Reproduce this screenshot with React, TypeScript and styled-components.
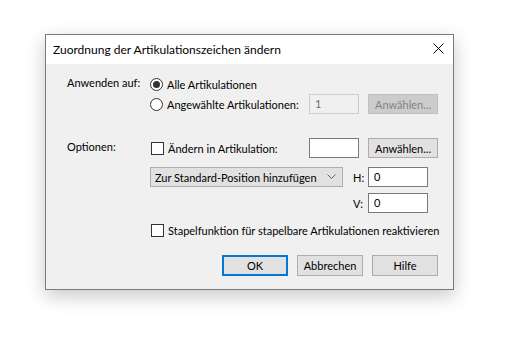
import * as React from "react"
import styled, { createGlobalStyle } from "styled-components"

const GlobalStyle = createGlobalStyle`
  html, body {
    margin: 0;
    padding: 0;
    background: #ffffff;
  }
  body {
    font-family: Lato, "Liberation Sans", sans-serif;
    font-size: 11px;
    color: #000;
  }
`

const Page = styled.div`
  width: 511px;
  height: 351px;
  padding: 34px 0 0 45px;
  box-sizing: border-box;
`

const Dialog = styled.div`
  width: 409px;
  height: 256px;
  box-sizing: border-box;
  border: 1px solid #7a7a7a;
  background: #f0f0f0;
  box-shadow: 0 6px 18px rgba(0, 0, 0, 0.22);
  display: flex;
  flex-direction: column;
`

const TitleBar = styled.div`
  height: 29px;
  background: #ffffff;
  display: flex;
  align-items: center;
  justify-content: space-between;
  padding: 0 9px 0 7px;
`

const Title = styled.span`
  font-size: 12px;
  color: #000;
  margin-top: -1px;
`

const CloseButton = styled.div`
  width: 12px;
  height: 12px;
  display: flex;
  align-items: center;
  justify-content: center;
  margin-top: -2px;
`

const Body = styled.div`
  flex: 1;
  display: flex;
  flex-direction: column;
  padding: 10px 15px 0 21px;
`

const Row = styled.div<{ $top?: number }>`
  display: flex;
  align-items: center;
  height: 20px;
  margin-top: ${(p) => p.$top ?? 0}px;
`

const SideLabel = styled.div`
  width: 83px;
  flex-shrink: 0;
  align-self: flex-start;
  line-height: 18px;
  white-space: nowrap;
`

const Indent = styled.div`
  width: 83px;
  flex-shrink: 0;
`

const Choice = styled.label<{ $width?: number }>`
  display: flex;
  align-items: center;
  gap: 4px;
  width: ${(p) => (p.$width ? `${p.$width}px` : "auto")};
  flex-shrink: 0;
  white-space: nowrap;
`

const Radio = styled.span<{ $checked?: boolean }>`
  width: 11px;
  height: 11px;
  flex-shrink: 0;
  border: 1px solid #333;
  border-radius: 50%;
  background: #fff;
  display: flex;
  align-items: center;
  justify-content: center;
  &::after {
    content: "";
    display: ${(p) => (p.$checked ? "block" : "none")};
    width: 7px;
    height: 7px;
    border-radius: 50%;
    background: #333;
  }
`

const Box = styled.span`
  width: 11px;
  height: 11px;
  flex-shrink: 0;
  border: 1px solid #333;
  background: #fff;
  margin-left: 1px;
`

const TextField = styled.div<{ $width: number; $disabled?: boolean }>`
  width: ${(p) => p.$width}px;
  height: 20px;
  box-sizing: border-box;
  border: 1px solid ${(p) => (p.$disabled ? "#cccccc" : "#7a7a7a")};
  background: ${(p) => (p.$disabled ? "#f0f0f0" : "#ffffff")};
  color: ${(p) => (p.$disabled ? "#6d6d6d" : "#000")};
  padding-left: 5px;
  line-height: 18px;
  flex-shrink: 0;
`

const Button = styled.div<{ $width: number; $disabled?: boolean; $default?: boolean }>`
  width: ${(p) => p.$width}px;
  height: 20px;
  box-sizing: border-box;
  border: ${(p) => (p.$default ? "2px solid #0078d7" : `1px solid ${p.$disabled ? "#bfbfbf" : "#adadad"}`)};
  background: ${(p) => (p.$disabled ? "#cccccc" : "#e1e1e1")};
  color: ${(p) => (p.$disabled ? "#838383" : "#000")};
  display: flex;
  align-items: center;
  justify-content: center;
  flex-shrink: 0;
  white-space: nowrap;
`

const Select = styled.div`
  width: 193px;
  height: 20px;
  box-sizing: border-box;
  border: 1px solid #adadad;
  background: #e1e1e1;
  display: flex;
  align-items: center;
  justify-content: space-between;
  padding: 0 6px 0 4px;
  flex-shrink: 0;
  white-space: nowrap;
`

const Spacer = styled.div<{ $width: number }>`
  width: ${(p) => p.$width}px;
  flex-shrink: 0;
`

const AxisLabel = styled.span`
  width: 15px;
  flex-shrink: 0;
`

const ButtonBar = styled.div`
  display: flex;
  justify-content: flex-end;
  gap: 9px;
  margin-top: 15px;
  height: 21px;
  & > div {
    height: 21px;
  }
`

function Chevron() {
  return (
    <svg width="9" height="6" viewBox="0 0 9 6">
      <path d="M0.5 0.5 L4.5 4.5 L8.5 0.5" fill="none" stroke="#606060" strokeWidth="1" />
    </svg>
  )
}

function CloseIcon() {
  return (
    <svg width="11" height="11" viewBox="0 0 11 11">
      <path d="M0.5 0.5 L10.5 10.5 M10.5 0.5 L0.5 10.5" stroke="#000" strokeWidth="1" />
    </svg>
  )
}

export default function App() {
  return (
    <Page>
      <GlobalStyle />
      <Dialog>
        <TitleBar>
          <Title>Zuordnung der Artikulationszeichen ändern</Title>
          <CloseButton>
            <CloseIcon />
          </CloseButton>
        </TitleBar>
        <Body>
          <Row>
            <SideLabel>Anwenden auf:</SideLabel>
            <Choice>
              <Radio $checked />
              Alle Artikulationen
            </Choice>
          </Row>
          <Row>
            <Indent />
            <Choice $width={159}>
              <Radio />
              Angewählte Artikulationen:
            </Choice>
            <TextField $width={50} $disabled>
              1
            </TextField>
            <Spacer $width={9} />
            <Button $width={70} $disabled>
              Anwählen...
            </Button>
          </Row>
          <Row $top={24}>
            <SideLabel>Optionen:</SideLabel>
            <Choice $width={159}>
              <Box />
              Ändern in Artikulation:
            </Choice>
            <TextField $width={50} />
            <Spacer $width={9} />
            <Button $width={70}>Anwählen...</Button>
          </Row>
          <Row $top={9}>
            <Indent />
            <Select>
              <span>Zur Standard-Position hinzufügen</span>
              <Chevron />
            </Select>
            <Spacer $width={10} />
            <AxisLabel>H:</AxisLabel>
            <TextField $width={60}>0</TextField>
          </Row>
          <Row $top={6}>
            <Indent />
            <Spacer $width={203} />
            <AxisLabel>V:</AxisLabel>
            <TextField $width={60}>0</TextField>
          </Row>
          <Row $top={7}>
            <Indent />
            <Choice>
              <Box />
              Stapelfunktion für stapelbare Artikulationen reaktivieren
            </Choice>
          </Row>
          <ButtonBar>
            <Button $width={66} $default>
              OK
            </Button>
            <Button $width={66}>Abbrechen</Button>
            <Button $width={66}>Hilfe</Button>
          </ButtonBar>
        </Body>
      </Dialog>
    </Page>
  )
}
